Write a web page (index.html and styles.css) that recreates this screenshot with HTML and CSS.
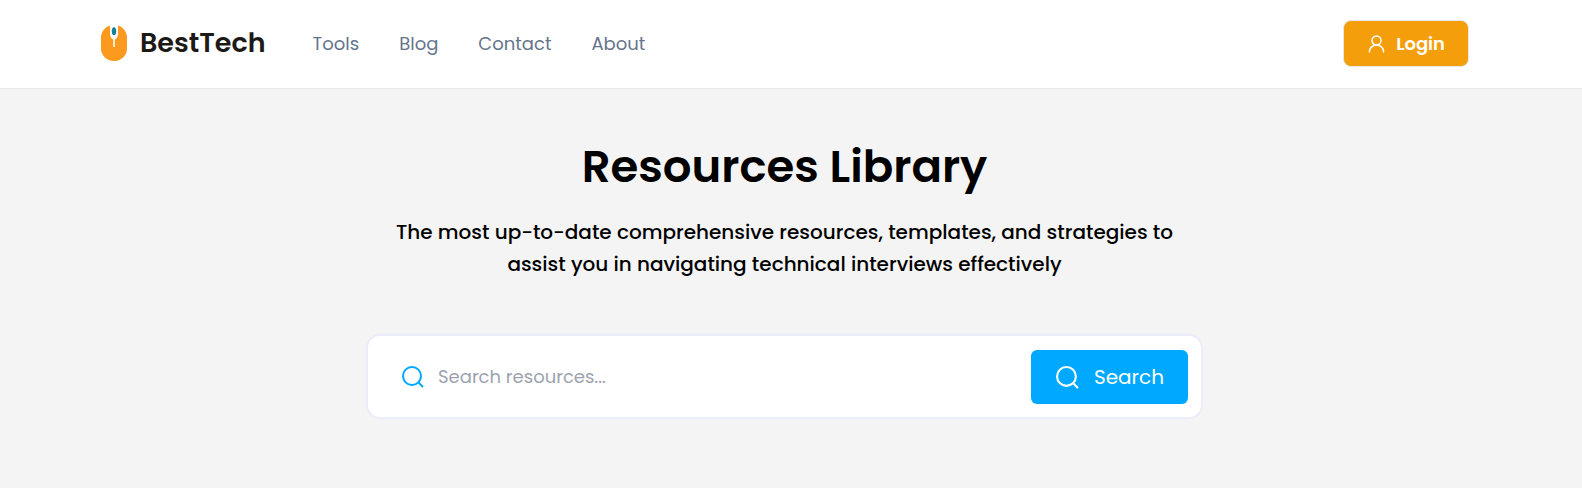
FILE: index.html
```
<!DOCTYPE html>
<html lang="en">
<head>
<meta charset="UTF-8">
<meta name="viewport" content="width=device-width, initial-scale=1">
<title>BestTech - Resources Library</title>
<link rel="stylesheet" href="styles.css">
</head>
<body>
  <header class="navbar">
    <a class="brand" href="#">
      <svg class="brand-logo" viewBox="0 0 26 36" aria-hidden="true">
        <rect width="26" height="36" rx="12.500" fill="#fb9a1f"/>
        <path d="M9 0v8c0 4 1.500 6.500 4 6.500s4-2.500 4-6.500V0z" fill="#fff"/>
        <path d="M13 12v10" stroke="#fff" stroke-width="1.600"/>
        <ellipse cx="13" cy="6.200" rx="2.200" ry="4" fill="#16809c"/>
      </svg>
      BestTech
    </a>
    <nav class="nav-links">
      <a href="#">Tools</a>
      <a href="#">Blog</a>
      <a href="#">Contact</a>
      <a href="#">About</a>
    </nav>
    <button class="login-btn" type="button">
      <svg class="login-icon" viewBox="0 0 16 18" aria-hidden="true">
        <circle cx="8" cy="5.500" r="4.500"/>
        <path d="M1 17.500v-1a7 6.500 0 0 1 14 0v1"/>
      </svg>
      Login
    </button>
  </header>

  <main class="hero">
    <h1>Resources Library</h1>
    <p class="intro">The most up-to-date comprehensive resources, templates, and strategies to assist you in navigating technical interviews effectively</p>
    <form class="search-box">
      <label class="search-label" for="search" aria-label="Search resources">
        <svg class="search-icon" viewBox="0 0 22 22" aria-hidden="true">
          <circle cx="10" cy="10" r="9"/>
          <path d="M16 16l5 5"/>
        </svg>
      </label>
      <input class="search-input" id="search" type="text" placeholder="Search resources...">
      <button class="search-btn" type="submit">
        <svg class="search-icon" viewBox="0 0 22 22" aria-hidden="true">
          <circle cx="10" cy="10" r="9"/>
          <path d="M16 16l5 5"/>
        </svg>
        Search
      </button>
    </form>
  </main>
</body>
</html>
```
FILE: styles.css
```
* {
  box-sizing: border-box;
}
body {
  margin: 0;
  background-color: #f4f4f4;
  color: black;
  font-family: Poppins, Inter, sans-serif;
}
a {
  text-decoration: none;
}
button {
  display: flex;
  align-items: center;
  font-family: inherit;
  color: white;
  cursor: pointer;
}

/* Top navigation bar */
.navbar {
  display: flex;
  align-items: center;
  padding: 20px 113px 21px 101px;
  background-color: white;
  border-bottom: 1px solid #e5e7eb;
}
.brand {
  display: flex;
  align-items: center;
  gap: 13px;
  padding-bottom: 2px;
  color: #1c1917;
  font-size: 27px;
  font-weight: 600;
  line-height: 36px;
}
.brand-logo {
  width: 26px;
  height: 36px;
}
.nav-links {
  display: flex;
  gap: 40px;
  margin-left: 47px;
}
.nav-links a {
  color: #64748b;
  font-size: 18px;
}
.login-btn {
  gap: 11px;
  height: 47px;
  margin-left: auto;
  padding: 0 23px 0 24px;
  background-color: #f59e0b;
  border: 1px solid #e5e7eb;
  border-radius: 8px;
  font-size: 18px;
  font-weight: 600;
}
.login-icon {
  width: 17px;
  height: 18px;
  fill: none;
  stroke: currentColor;
  stroke-width: 1.5;
}

/* Heading and search */
.hero {
  display: flex;
  flex-direction: column;
  align-items: center;
  padding: 48px 37px 48px 24px;
}
h1 {
  margin: 0;
  font-size: 45px;
  font-weight: 600;
  line-height: 60px;
}
.intro {
  max-width: 820px;
  margin: 19px 0 54px;
  font-size: 20px;
  font-weight: 500;
  line-height: 32px;
  text-align: center;
}
.search-box {
  display: flex;
  align-items: center;
  width: 100%;
  max-width: 837px;
  padding: 14px 13px 13px 34px;
  background-color: white;
  border: 2px solid #ebedfa;
  border-radius: 14px;
}
.search-label {
  display: flex;
  color: #00a9ff;
}
.search-icon {
  width: 22px;
  height: 22px;
  fill: none;
  stroke: currentColor;
  stroke-width: 2;
}
.search-input {
  flex: 1;
  min-width: 0;
  padding: 0 14px;
  border: none;
  outline: none;
  font-family: inherit;
  font-size: 18px;
  line-height: 24px;
}
.search-input::placeholder {
  color: #9ca3af;
}
.search-btn {
  gap: 15px;
  height: 54px;
  padding: 0 24px 0 25px;
  background-color: #00a9ff;
  border: none;
  border-radius: 6px;
  font-size: 20px;
}
.search-btn .search-icon {
  width: 23px;
  height: 23px;
}
```
